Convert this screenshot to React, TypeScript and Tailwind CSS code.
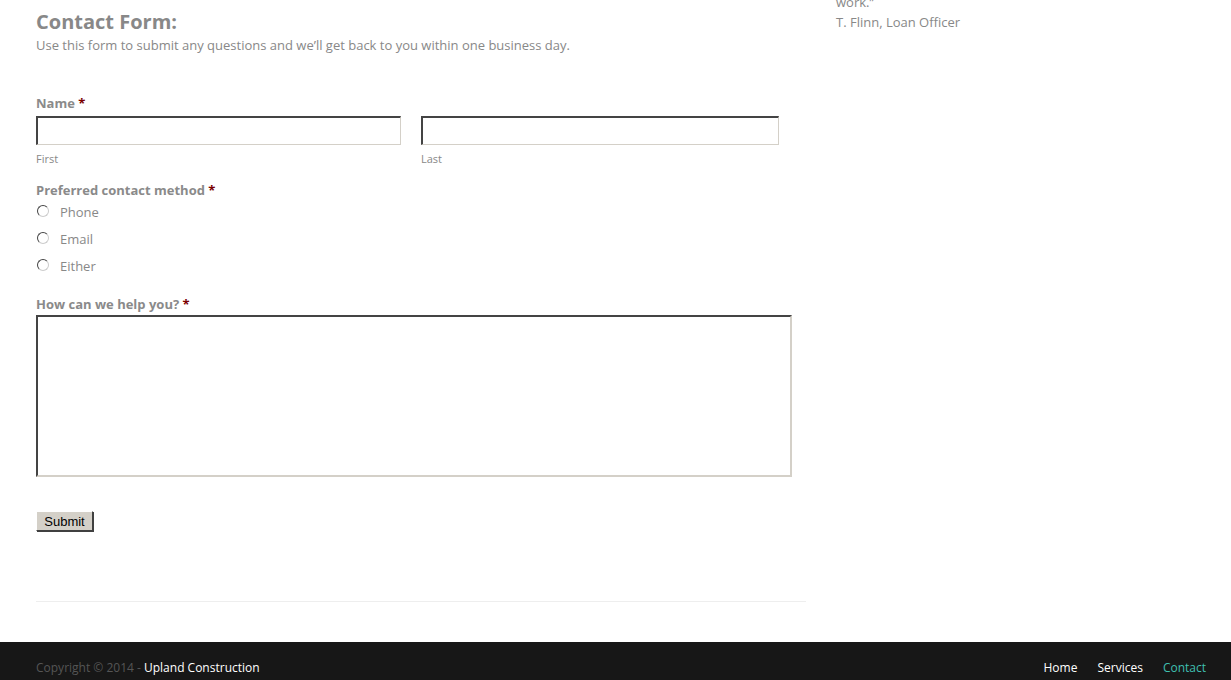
import React from "react";

const font = { fontFamily: '"Open Sans", "Noto Sans", sans-serif' };

function Radio({ label }: { label: string }) {
  return (
    <div className="flex items-center h-[27px]">
      <span className="ml-[1px] w-[12px] h-[12px] rounded-full bg-white border border-t-[#444] border-l-[#444] border-r-[#ccc] border-b-[#ccc] -mt-[3px]" />
      <span className="ml-[11px] text-[13px] text-[#888]">{label}</span>
    </div>
  );
}

const inputCls =
  "block h-[29px] bg-white border-2 border-t-[#444] border-l-[#444] border-r-[#d4d0c8] border-b-[#d4d0c8] border-r-[1px] border-b-[1px]";

export default function App() {
  return (
    <div className="w-[1231px] h-[680px] bg-white overflow-hidden flex flex-col" style={font}>
      <div className="flex flex-1">
        <div className="w-[770px] ml-[36px]">
          <h2 className="text-[20px] font-bold text-[#888] leading-[24px] mt-[10px]">Contact Form:</h2>
          <p className="text-[13px] text-[#888] leading-[18px] mt-[2px]">
            Use this form to submit any questions and we’ll get back to you within one business day.
          </p>

          <div className="mt-[40px] text-[13px] font-bold text-[#8a8a8a] leading-[18px]">
            Name <span className="text-[#7a0000]">*</span>
          </div>
          <div className="flex mt-[4px]">
            <div>
              <div className={inputCls + " w-[365px]"} />
              <div className="text-[11px] text-[#888] mt-[6px] leading-[15px]">First</div>
            </div>
            <div className="ml-[20px]">
              <div className={inputCls + " w-[358px]"} />
              <div className="text-[11px] text-[#888] mt-[6px] leading-[15px]">Last</div>
            </div>
          </div>

          <div className="mt-[15px] text-[13px] font-bold text-[#8a8a8a] leading-[18px]">
            Preferred contact method <span className="text-[#7a0000]">*</span>
          </div>
          <div>
            <Radio label="Phone" />
            <Radio label="Email" />
            <Radio label="Either" />
          </div>

          <div className="mt-[15px] text-[13px] font-bold text-[#8a8a8a] leading-[18px]">
            How can we help you? <span className="text-[#7a0000]">*</span>
          </div>
          <div className="block h-[162px] w-[756px] bg-white border-2 border-t-[#444] border-l-[#444] border-r-[#d4d0c8] border-b-[#d4d0c8] mt-[2px]" />

          <button
            className="block mt-[34px] h-[20px] w-[57px] bg-[#d4d0c8] text-black text-[13px] leading-[15px] border border-t-white border-l-white border-r-[#404040] border-b-[#404040] shadow-[1px_1px_0_#404040]"
            style={{ fontFamily: '"Liberation Sans", Arial, sans-serif' }}
          >
            Submit
          </button>

          <div className="mt-[70px] h-px bg-[#eeeeee]" />
        </div>
        <div className="ml-[30px] -mt-[8px] text-[13px] text-[#888] leading-[20px]">
          <div>work.”</div>
          <div>T. Flinn, Loan Officer</div>
        </div>
      </div>
      <div className="h-[38px] bg-[#171717] flex items-end pb-[3px] px-[36px] pr-[25px] text-[12px] leading-[18px]">
        <div className="text-[#555]">
          Copyright © 2014 - <span className="text-white">Upland Construction</span>
        </div>
        <div className="ml-auto flex gap-[20px]">
          <span className="text-white">Home</span>
          <span className="text-white">Services</span>
          <span className="text-[#3fbfb0]">Contact</span>
        </div>
      </div>
    </div>
  );
}
